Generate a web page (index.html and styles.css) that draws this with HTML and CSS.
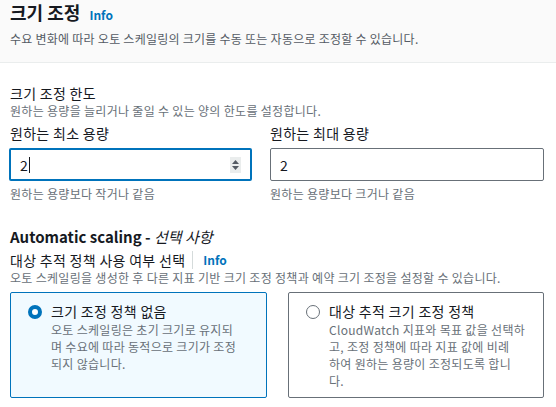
FILE: index.html
```html
<!DOCTYPE html>
<html>
<head>
    <title>크기 조정</title>
    <link rel="stylesheet" href="styles.css">
</head>
<body>
    <div class="header">
        <h2>크기 조정 <a class="info" href="#">Info</a></h2>
        <p class="desc">수요 변화에 따라 오토 스케일링의 크기를 수동 또는 자동으로 조정할 수 있습니다.</p>
    </div>

    <div class="content">
        <div class="group">
            <div class="group-title">크기 조정 한도</div>
            <div class="hint">원하는 용량을 늘리거나 줄일 수 있는 양의 한도를 설정합니다.</div>
        </div>

        <div class="fields">
            <div class="field">
                <label>원하는 최소 용량</label>
                <div class="input focused">
                    <span class="value">2</span><span class="caret"></span>
                    <span class="spin">
                        <svg width="9" height="12" viewBox="0 0 9 12"><path d="M4.5 1 L8 5 H1 Z M1 7 H8 L4.5 11 Z" fill="#545b64"/></svg>
                    </span>
                </div>
                <div class="hint">원하는 용량보다 작거나 같음</div>
            </div>
            <div class="field">
                <label>원하는 최대 용량</label>
                <div class="input">
                    <span class="value">2</span>
                </div>
                <div class="hint">원하는 용량보다 크거나 같음</div>
            </div>
        </div>

        <h3>Automatic scaling - <i>선택 사항</i></h3>
        <div class="sub-title">대상 추적 정책 사용 여부 선택 <span class="sep"></span><a class="info" href="#">Info</a></div>
        <div class="hint">오토 스케일링을 생성한 후 다른 지표 기반 크기 조정 정책과 예약 크기 조정을 설정할 수 있습니다.</div>

        <div class="tiles">
            <div class="tile selected">
                <span class="radio"></span>
                <div>
                    <div class="tile-title">크기 조정 정책 없음</div>
                    <div class="tile-desc">오토 스케일링은 초기 크기로 유지되<br>며 수요에 따라 동적으로 크기가 조정<br>되지 않습니다.</div>
                </div>
            </div>
            <div class="tile">
                <span class="radio"></span>
                <div>
                    <div class="tile-title">대상 추적 크기 조정 정책</div>
                    <div class="tile-desc">CloudWatch 지표와 목표 값을 선택하<br>고, 조정 정책에 따라 지표 값에 비례<br>하여 원하는 용량이 조정되도록 합니<br>다.</div>
                </div>
            </div>
        </div>
    </div>
</body>
</html>
```

FILE: styles.css
```css
body { margin: 0; background: #fff; color: #16191f; font-family: "Noto Sans CJK KR", sans-serif; font-size: 14px; letter-spacing: 0.3px; }
.header { background: #fafafa; border-bottom: 1px solid #eaeded; height: 63px; padding: 0 10px; box-sizing: border-box; }
h2 { margin: 0; padding-top: 1px; font-size: 18px; line-height: 22px; font-weight: bold; letter-spacing: 0; }
.info { color: #0073bb; font-size: 12px; font-weight: bold; text-decoration: none; margin-left: 5px; letter-spacing: 0; }
.desc { margin: 5px 0 0; font-size: 12px; line-height: 16px; color: #545b64; letter-spacing: 0.25px; }
.content { padding: 20px 10px 0; }
.group-title { font-size: 14px; line-height: 20px; }
.hint { font-size: 12px; line-height: 16px; color: #687078; }
.fields { display: grid; grid-template-columns: 242px 274px; column-gap: 18px; margin-top: 4px; }
.field label { display: block; font-size: 14px; line-height: 20px; margin-bottom: 5px; }
.input { height: 31px; border: 1px solid #687078; border-radius: 2px; display: flex; align-items: center; padding: 0 9px; font-size: 14px; margin-bottom: 5px; }
.input.focused { border: 2px solid #0073bb; height: 29px; margin-left: -1px; padding: 0 9px 0 9px; }
.caret { width: 1px; height: 16px; background: #16191f; margin-left: 1px; }
.spin { margin-left: auto; width: 11px; height: 16px; background: #eaeded; display: flex; align-items: center; justify-content: center; }
h3 { margin: 24px 0 0; font-size: 15px; line-height: 22px; font-weight: bold; letter-spacing: 0; }
h3 i { font-weight: normal; }
.sub-title { font-size: 14px; line-height: 20px; margin-top: 2px; display: flex; align-items: center; }
.sub-title .sep { display: inline-block; width: 1px; height: 18px; background: #d5dbdb; margin: 0 4px 0 7px; }
.sub-title .info { font-size: 12px; margin-left: 6px; }
.tiles { display: grid; grid-template-columns: 257px 256px; column-gap: 21px; margin-top: 6px; }
.tile { border: 1px solid #687078; border-radius: 2px; height: 106px; box-sizing: border-box; display: flex; align-items: flex-start; padding: 8px 10px 0 16px; }
.tile.selected { border-color: #0073bb; background: #f1faff; }
.radio { flex: none; width: 14px; height: 14px; border-radius: 50%; border: 1px solid #687078; box-sizing: border-box; margin: 4px 9px 0 1px; background: #fff; }
.tile.selected .radio { border: 4px solid #0073bb; }
.tile-title { font-size: 14px; line-height: 20px; }
.tile-desc { font-size: 12px; line-height: 17px; color: #687078; white-space: nowrap; }
```
